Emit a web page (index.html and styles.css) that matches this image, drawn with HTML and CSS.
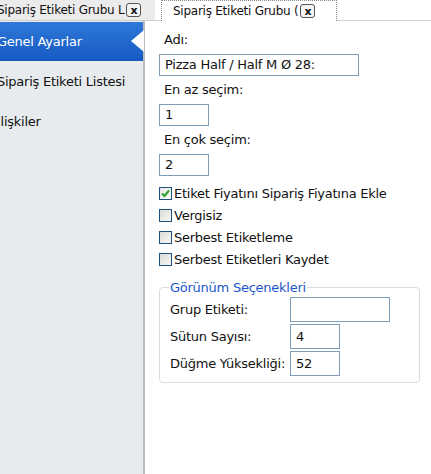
FILE: index.html
```html
<!DOCTYPE html>
<html lang="tr">
<head>
<meta charset="utf-8">
<link rel="stylesheet" href="styles.css">
</head>
<body>
<div class="app">
  <div class="tabbar">
    <div class="tab tab-inactive"><span class="tab-text">Sipariş Etiketi Grubu L</span><span class="close">x</span></div>
    <div class="tab-gap"></div>
    <div class="tab tab-active"><span class="tab-text">Sipariş Etiketi Grubu (</span><span class="close">x</span></div>
    <div class="tab-rest"></div>
  </div>
  <div class="main">
    <nav class="sidebar">
      <div class="nav-item selected">Genel Ayarlar<span class="notch"></span></div>
      <div class="nav-item">Sipariş Etiketi Listesi</div>
      <div class="nav-item">İlişkiler</div>
    </nav>
    <section class="content">
      <div class="label">Adı:</div>
      <div class="input wide">Pizza Half / Half M Ø 28:</div>
      <div class="label">En az seçim:</div>
      <div class="input small">1</div>
      <div class="label">En çok seçim:</div>
      <div class="input small">2</div>
      <div class="checks">
        <div class="check"><span class="box checked"><svg viewBox="0 0 13 13" width="13" height="13"><path d="M3 6.5 L5.5 9 L10 3.5" fill="none" stroke="#2e9e2e" stroke-width="2"/></svg></span>Etiket Fiyatını Sipariş Fiyatına Ekle</div>
        <div class="check"><span class="box"></span>Vergisiz</div>
        <div class="check"><span class="box"></span>Serbest Etiketleme</div>
        <div class="check"><span class="box"></span>Serbest Etiketleri Kaydet</div>
      </div>
      <fieldset class="group">
        <legend>Görünüm Seçenekleri</legend>
        <div class="grid">
          <div class="glabel">Grup Etiketi:</div>
          <div class="input gwide"></div>
          <div class="glabel">Sütun Sayısı:</div>
          <div class="input gsmall">4</div>
          <div class="glabel">Düğme Yüksekliği:</div>
          <div class="input gsmall">52</div>
        </div>
      </fieldset>
    </section>
  </div>
</div>
</body>
</html>
```
FILE: styles.css
```css
* { box-sizing: border-box; }
html, body { margin: 0; padding: 0; background: #fff; }
body {
  font-family: Tahoma, "DejaVu Sans", sans-serif;
  font-size: 12px;
  letter-spacing: -0.25px;
  color: #111;
  width: 431px;
  height: 474px;
  overflow: hidden;
}
.app { display: flex; flex-direction: column; height: 474px; }
.tabbar {
  display: flex;
  height: 21px;
  align-items: flex-end;
  margin-left: -3px;
}
.tab {
  height: 21px;
  display: flex;
  align-items: center;
  white-space: nowrap;
}
.tab-inactive {
  width: 158px;
  background: #ebebeb;
  border-bottom: 1px solid #cfcfcf;
}
.tab-gap { width: 6px; height: 21px; border-bottom: 1px solid #cfcfcf; }
.tab-active {
  width: 176px;
  background: #fff;
  border: 1px dotted #888;
  border-bottom: none;
  padding-left: 11px;
}
.tab-rest { flex: 1; height: 21px; border-bottom: 1px solid #cfcfcf; }
.close {
  display: inline-flex;
  align-items: center;
  justify-content: center;
  width: 15px;
  height: 14px;
  border: 1px solid #555;
  border-radius: 3px;
  font-size: 11px;
  font-weight: bold;
  line-height: 1;
  margin-left: 2px;
  background: #f4f4f4;
  letter-spacing: 0;
}
.main { display: flex; flex: 1; }
.sidebar {
  width: 149px;
  background: #e7ebee;
  border-right: 2px solid #b9bdc1;
  padding-top: 1px;
  margin-left: -3px;
}
.nav-item {
  position: relative;
  height: 40px;
  display: flex;
  align-items: center;
  font-size: 13px;
  color: #111;
  white-space: nowrap;
}
.nav-item.selected {
  background: linear-gradient(#2f78d8, #1659c3);
  color: #fff;
  height: 39px;
}
.notch {
  position: absolute;
  right: -1px;
  top: 8px;
  width: 0;
  height: 0;
  border-top: 11px solid transparent;
  border-bottom: 11px solid transparent;
  border-right: 13px solid #fff;
}
.content {
  flex: 1;
  padding: 11px 11px 0 14px;
}
.label { font-size: 13px; margin-left: 5px; height: 22px; line-height: 16px; }
.input {
  border: 1px solid #7f9db9;
  height: 22px;
  line-height: 20px;
  padding-left: 5px;
  font-size: 13px;
  background: #fff;
}
.input.wide { width: 200px; margin-bottom: 6px; }
.input.small { width: 50px; margin-bottom: 6px; }
.checks { margin-top: 1px; }
.check {
  display: flex;
  align-items: center;
  height: 22px;
  font-size: 13px;
}
.box {
  width: 13px;
  height: 13px;
  border: 1px solid #1c5180;
  background: linear-gradient(135deg, #dcdcd8, #f7f7f5);
  margin-right: 2px;
  display: inline-flex;
}
.box svg { margin: -1px; }
.box.checked { background: linear-gradient(135deg, #e6e6e2, #fbfbf9); }
.group {
  margin: 10px 0 0 0;
  width: 261px;
  border: 1px solid #dcdcdc;
  border-radius: 4px;
  padding: 0 0 6px 10px;
}
.group legend {
  color: #1a57c9;
  font-size: 13px;
  padding: 0 1px;
  margin-left: -1px;
}
.grid {
  display: grid;
  grid-template-columns: 120px auto;
  row-gap: 2px;
  align-items: center;
  margin-top: 2px;
}
.glabel { font-size: 13px; }
.input.gwide { width: 100px; height: 25px; }
.input.gsmall { width: 50px; height: 25px; line-height: 23px; }
```
